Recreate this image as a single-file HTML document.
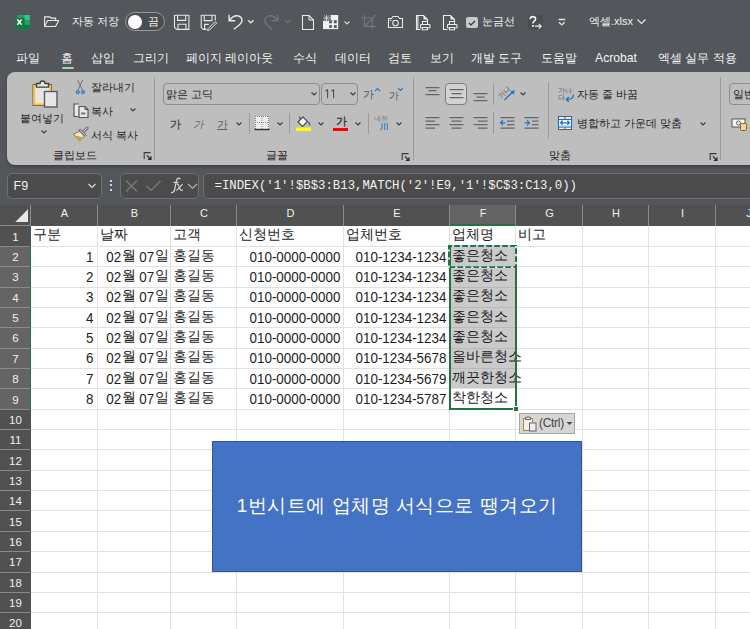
<!DOCTYPE html>
<html><head><meta charset="utf-8">
<style>
*{margin:0;padding:0;box-sizing:border-box}
html,body{width:750px;height:629px;overflow:hidden;background:#53565a;font-family:"Liberation Sans",sans-serif;position:relative}
.a{position:absolute;white-space:nowrap}
.tb{color:#f0f0f0;font-size:11px;line-height:14px}
.tab{color:#f2f2f2;font-size:12.2px;line-height:16px;top:49.7px}
#ribbon{position:absolute;left:7px;top:72px;width:760px;height:93px;background:#bebebe;border-radius:8px;box-shadow:0 2px 3px rgba(0,0,0,.25)}
.rt{color:#262626;font-size:11.2px;line-height:14px}
.sep{position:absolute;width:1px;background:#9a9a9a}
.fbox{position:absolute;top:173px;height:26px;border:1px solid #707070;border-radius:5px;background:#4b4b4b}
#hdr{position:absolute;left:0;top:205px;width:750px;height:20px;background:#4d4d4d}
#grid{position:absolute;left:31px;top:225px;width:719px;height:404px;background:#fff}
.vl{position:absolute;top:0;width:1px;height:404px;background:#e1e1e1}
.hl{position:absolute;left:0;width:719px;height:1px;background:#e1e1e1}
.ch{position:absolute;top:203.4px;height:20px;color:#f0f0f0;font-size:11px;line-height:20px;text-align:center}
.rh{position:absolute;left:0;width:31px;color:#f0f0f0;font-size:11.5px;text-align:center;background:#4d4d4d;padding-top:1.2px}
.c{position:absolute;color:#1c1c1c;font-size:14.5px;line-height:20px;white-space:nowrap}
</style></head><body>

<!-- title bar -->
<svg class="a" style="left:14px;top:14px" width="17" height="17" viewBox="0 0 17 17">
 <rect x="3.2" y="1" width="12.6" height="14.7" rx="1" fill="#21a366"/>
 <rect x="10.5" y="1" width="5.3" height="5" fill="#33c481"/>
 <rect x="3.2" y="10.8" width="12.6" height="4.9" fill="#107c41"/>
 <rect x="1" y="3.8" width="9.6" height="9.1" rx="0.8" fill="#107c41"/>
 <path d="M3.3 5.6 L7.6 10.7 M7.6 5.6 L3.3 10.7" stroke="#fff" stroke-width="1.5"/>
</svg>
<svg class="a" style="left:43px;top:15px" width="18" height="13" viewBox="0 0 18 13">
 <path d="M1.6 11.5 V1.9 H7 L8.1 3.1 H12.6 V5.5" fill="none" stroke="#ececec" stroke-width="1.1"/>
 <path d="M1.6 11.5 L4.6 5.5 H15.7 L12.6 11.5 Z" fill="none" stroke="#ececec" stroke-width="1.1" stroke-linejoin="round"/>
</svg>
<div class="a tb" style="left:72px;top:14px">자동 저장</div>
<div class="a" style="left:125px;top:12px;width:40px;height:19px;border:1px solid #9a9a9a;border-radius:10px;background:#4a4d51"></div>
<div class="a" style="left:128px;top:14.5px;width:14px;height:14px;border-radius:7px;background:#fff"></div>
<div class="a tb" style="left:148px;top:14px">끔</div>
<svg class="a" style="left:173px;top:14px" width="17" height="17" viewBox="0 0 17 17">
 <path d="M1.5 1.2 H15.9 V15.4 H3.5 L1.5 13.4 Z" fill="none" stroke="#e8e8e8" stroke-width="1.1" stroke-linejoin="round"/>
 <path d="M4.6 1.2 V6.4 H12.7 V1.2 M5 15.4 V10.3 H13 V15.4" fill="none" stroke="#e8e8e8" stroke-width="1.1"/>
</svg>
<svg class="a" style="left:200px;top:14px" width="18" height="18" viewBox="0 0 18 18">
 <path d="M6.8 15.4 H3.2 L1.2 13.4 V1.2 H15.3 V6.6" fill="none" stroke="#e8e8e8" stroke-width="1.1" stroke-linejoin="round"/>
 <path d="M4.2 1.2 V6.6 H12 V1.2 M4.6 15.2 V10.4 H8.8" fill="none" stroke="#e8e8e8" stroke-width="1.1"/>
 <path d="M15.2 7.6 L16.6 9 L9.6 16 L7.6 16.6 L8.2 14.6 Z" fill="none" stroke="#e8e8e8" stroke-width="1" stroke-linejoin="round"/>
</svg>
<svg class="a" style="left:227px;top:13px" width="18" height="18" viewBox="0 0 18 18">
 <path d="M2.1 1.7 V7.7 H8.2" fill="none" stroke="#ececec" stroke-width="1.4"/>
 <path d="M2.5 7.3 Q6 2.4 10.4 2.8 Q15.2 3.6 15 8 Q14.8 10.6 6.8 16.3" fill="none" stroke="#ececec" stroke-width="1.4"/>
</svg>
<svg class="a" style="left:247px;top:19px" width="8" height="6" viewBox="0 0 8 6"><path d="M1 1.2 L3.8 3.8 L6.6 1.2" fill="none" stroke="#e0e0e0" stroke-width="1.4"/></svg>
<svg class="a" style="left:262px;top:13px" width="18" height="18" viewBox="0 0 18 18">
 <path d="M15.7 1.7 V7.7 H9.6" fill="none" stroke="#75787c" stroke-width="1.3"/>
 <path d="M15.3 7.3 Q11.8 2.4 7.4 2.8 Q2.6 3.6 2.8 8 Q3 10.6 10.1 16.3" fill="none" stroke="#75787c" stroke-width="1.3"/>
</svg>
<svg class="a" style="left:283.5px;top:19px" width="8" height="6" viewBox="0 0 8 6"><path d="M1 1.2 L3.8 3.8 L6.6 1.2" fill="none" stroke="#75787c" stroke-width="1.2"/></svg>
<svg class="a" style="left:301px;top:14px" width="14" height="17" viewBox="0 0 14 17">
 <path d="M1.5 1.5 H8 L12.5 6 V15.5 H1.5 Z" fill="none" stroke="#e8e8e8" stroke-width="1.1"/>
 <path d="M8 1.5 V6 H12.5" fill="none" stroke="#e8e8e8" stroke-width="1"/>
</svg>
<svg class="a" style="left:322px;top:14px" width="17" height="17" viewBox="0 0 17 17">
 <rect x="1" y="6.8" width="15.2" height="8.3" fill="#f0f0f0"/>
 <rect x="8.6" y="1" width="7.6" height="5.8" fill="#f0f0f0"/>
 <rect x="7.2" y="6.3" width="1.4" height="8.8" fill="#f0f0f0"/>
 <rect x="7.2" y="6.3" width="2.7" height="3" fill="#53565a"/>
 <rect x="11.9" y="6.3" width="2.8" height="3" fill="#53565a"/>
 <rect x="7.2" y="11.1" width="2.7" height="2.8" fill="#53565a"/>
 <rect x="11.9" y="11.1" width="2.8" height="2.8" fill="#53565a"/>
 <path d="M4.6 0.5 V7.5 M1 4 H8 M2.2 1.6 L7 6.4 M7 1.6 L2.2 6.4" stroke="#d8d8d8" stroke-width="0.8"/>
</svg>
<svg class="a" style="left:343px;top:20px" width="8" height="6" viewBox="0 0 8 6"><path d="M1.5 1.5 L4 4 L6.5 1.5" fill="none" stroke="#d8d8d8" stroke-width="1.1"/></svg>
<svg class="a" style="left:360px;top:14px" width="17" height="17" viewBox="0 0 17 17">
 <path d="M4.5 1 V12.4 H16 M1.1 3.8 H12.4 V15.3 M5 11.8 L15.6 1.2" fill="none" stroke="#75787c" stroke-width="1.1"/>
</svg>
<svg class="a" style="left:387px;top:15px" width="17" height="14" viewBox="0 0 17 14">
 <path d="M1.5 3.5 H4.5 L6 1.5 H11 L12.5 3.5 H15.5 V12.5 H1.5 Z" fill="none" stroke="#e8e8e8" stroke-width="1.1"/>
 <circle cx="8.5" cy="8" r="2.8" fill="none" stroke="#e8e8e8" stroke-width="1.1"/>
 <rect x="2.8" y="4.8" width="1.5" height="1.2" fill="#e8e8e8"/>
</svg>
<svg class="a" style="left:415px;top:14px" width="16" height="17" viewBox="0 0 16 17">
 <rect x="1.5" y="1.5" width="2.2" height="14" fill="#b8b8b8"/><path d="M5.5 15.5 H1.5 V1.5 H8.5 L12.5 5.5 V7.5" fill="none" stroke="#ececec" stroke-width="1.1"/>
 <path d="M8.5 1.5 L12.5 5.5 H8.5 Z" fill="#ececec"/>
 <rect x="7.5" y="7.5" width="5" height="3.5" fill="#53565a" stroke="#ececec" stroke-width="1"/>
 <rect x="5.5" y="10.5" width="9.5" height="3.5" rx="0.8" fill="#53565a" stroke="#ececec" stroke-width="1.1"/>
 <rect x="7.5" y="13.5" width="5" height="2.3" fill="#53565a" stroke="#ececec" stroke-width="1"/>
</svg>
<svg class="a" style="left:442px;top:14px" width="16" height="17" viewBox="0 0 16 17">
 <path d="M5.5 15.5 H1.5 V1.5 H8.5 L12.5 5.5 V7.5" fill="none" stroke="#ececec" stroke-width="1.1"/>
 <path d="M8.5 1.5 L12.5 5.5 H8.5 Z" fill="#ececec"/>
 <rect x="7.5" y="7.5" width="5" height="3.5" fill="#53565a" stroke="#ececec" stroke-width="1"/>
 <rect x="5.5" y="10.5" width="9.5" height="3.5" rx="0.8" fill="#53565a" stroke="#ececec" stroke-width="1.1"/>
 <rect x="7.5" y="13.5" width="5" height="2.3" fill="#53565a" stroke="#ececec" stroke-width="1"/>
</svg>
<div class="a" style="left:466px;top:16.5px;width:11.5px;height:11.5px;border-radius:2px;background:#c8c8c8"></div>
<svg class="a" style="left:466px;top:16.5px" width="12" height="12" viewBox="0 0 12 12"><path d="M3 6 L5 8 L9 4" fill="none" stroke="#333" stroke-width="1.2"/></svg>
<div class="a tb" style="left:482px;top:14px">눈금선</div>
<svg class="a" style="left:528px;top:15px" width="15" height="15" viewBox="0 0 15 15">
 <rect x="0" y="0" width="15" height="14.5" fill="#4c4d4f"/>
 <path d="M2.2 4.2 Q2.2 1.6 4.9 1.6 Q7.6 1.6 7.6 4 Q7.6 5.4 6 6.3 Q4.9 7 4.9 8.6" fill="none" stroke="#f0f0f0" stroke-width="1.6"/>
 <rect x="4" y="10" width="1.8" height="1.8" fill="#f0f0f0"/>
 <path d="M6.8 11.2 H13.2 M10.8 8.8 L13.2 11.2 L10.8 13.6" fill="none" stroke="#f0f0f0" stroke-width="1.2"/>
</svg>
<svg class="a" style="left:557px;top:18px" width="10" height="9" viewBox="0 0 10 9"><path d="M1.5 1.5 H8.2 M2 4.3 L4.85 6.9 L7.7 4.3" fill="none" stroke="#e0e0e0" stroke-width="1.4"/></svg>
<div class="a tb" style="left:589px;top:14px">엑셀.xlsx</div>
<svg class="a" style="left:636px;top:18px" width="11" height="8" viewBox="0 0 11 8"><path d="M1.5 1.5 L5.5 5.5 L9.5 1.5" fill="none" stroke="#e8e8e8" stroke-width="1.2"/></svg>

<!-- tabs -->
<div class="a tab" style="left:16px">파일</div>
<div class="a tab" style="left:61px">홈</div>
<div class="a tab" style="left:91px">삽입</div>
<div class="a tab" style="left:133px">그리기</div>
<div class="a tab" style="left:186px">페이지 레이아웃</div>
<div class="a tab" style="left:293px">수식</div>
<div class="a tab" style="left:335px">데이터</div>
<div class="a tab" style="left:388px">검토</div>
<div class="a tab" style="left:430px">보기</div>
<div class="a tab" style="left:471px">개발 도구</div>
<div class="a tab" style="left:541px">도움말</div>
<div class="a tab" style="left:595px">Acrobat</div>
<div class="a tab" style="left:658px">엑셀 실무 적용</div>
<div class="a" style="left:62px;top:67px;width:12px;height:2px;background:#9fd6b4;border-radius:1px"></div>

<div id="ribbon"></div>
<!-- clipboard group -->
<svg class="a" style="left:30px;top:78px" width="30" height="32" viewBox="0 0 30 32">
 <rect x="3" y="6.5" width="18.5" height="21" fill="#e6e6e6" stroke="#7a5a14" stroke-width="1"/>
 <rect x="4.3" y="7.8" width="16" height="18.5" fill="none" stroke="#f2c14e" stroke-width="1.8"/>
 <path d="M6.5 9.2 V5.5 H10 A2.5 2.5 0 0 1 15 5.5 H18.5 V9.2 Z" fill="#e6e6e6" stroke="#404040" stroke-width="1.3"/>
 <rect x="14.5" y="13.5" width="12.5" height="15.5" fill="#e6e6e6" stroke="#5a5a5a" stroke-width="1.4"/>
</svg>
<div class="a rt" style="left:20px;top:111px">붙여넣기</div>
<svg class="a" style="left:40px;top:129px" width="8" height="6" viewBox="0 0 8 6"><path d="M1.5 1.5 L4 4 L6.5 1.5" fill="none" stroke="#404040" stroke-width="1.2"/></svg>
<svg class="a" style="left:74px;top:78px" width="14" height="17" viewBox="0 0 14 17">
 <path d="M3.5 1.8 L8.6 12.2 M8.7 1.8 L3.9 12.2" stroke="#6a6a6a" stroke-width="0.9" fill="none"/>
 <circle cx="3.8" cy="14.1" r="1.75" fill="#2a7ac8" stroke="#2a7ac8" stroke-width="0.6"/>
 <circle cx="9.0" cy="14.1" r="1.75" fill="#2a7ac8" stroke="#2a7ac8" stroke-width="0.6"/>
 <circle cx="3.8" cy="14.1" r="0.55" fill="#cfe0f0"/>
 <circle cx="9.0" cy="14.1" r="0.55" fill="#cfe0f0"/>
</svg>
<div class="a rt" style="left:91px;top:80px">잘라내기</div>
<svg class="a" style="left:72px;top:102px" width="18" height="18" viewBox="0 0 18 18">
 <path d="M7 2 H2 V14.5 H6" fill="#e8e8e8" stroke="#555" stroke-width="1.2"/>
 <path d="M7 4.5 H13 L16 7.5 V15.5 H7 Z" fill="#e8e8e8" stroke="#555" stroke-width="1.2"/>
 <path d="M13 4.5 V7.5 H16" fill="none" stroke="#555" stroke-width="1"/>
 <rect x="9" y="10.5" width="4.5" height="2" fill="#777"/>
</svg>
<div class="a rt" style="left:91px;top:104px">복사</div>
<svg class="a" style="left:129px;top:107px" width="8" height="6" viewBox="0 0 8 6"><path d="M1.5 1.5 L4 4 L6.5 1.5" fill="none" stroke="#404040" stroke-width="1.2"/></svg>
<svg class="a" style="left:70px;top:124px" width="22" height="20" viewBox="0 0 22 20">
 <path d="M3.3 10.2 L10.2 7 L14.4 12 L9.5 16.8 Z" fill="#e6e6e6" stroke="#8a6a18" stroke-width="0.9" stroke-linejoin="round"/>
 <path d="M4.6 11.6 L13.2 13.2 L9.5 16.8 Z" fill="#d6a32a"/>
 <path d="M13 8.2 L17.3 3.9" stroke="#6a6a6a" stroke-width="2.8" stroke-linecap="round"/>
 <path d="M13 8.2 L17.3 3.9" stroke="#e8e8e8" stroke-width="1" stroke-linecap="round"/>
 <path d="M10 6.2 L15.2 11.2" stroke="#6a6a6a" stroke-width="2.6" stroke-linecap="round"/>
 <path d="M10 6.2 L15.2 11.2" stroke="#e8e8e8" stroke-width="0.9" stroke-linecap="round"/>
</svg>
<div class="a rt" style="left:91px;top:128px">서식 복사</div>
<div class="a rt" style="left:53px;top:148px">클립보드</div>
<svg class="a" style="left:143px;top:151px" width="10" height="10" viewBox="0 0 10 10"><path d="M1.2 8 V1.6 H7.6" fill="none" stroke="#3a3a3a" stroke-width="1.1"/><path d="M3.9 4.3 L7.6 8 M8 5.3 V8.4 H4.9" fill="none" stroke="#2a2a2a" stroke-width="1.2"/></svg>
<div class="sep" style="left:154px;top:77px;height:83px"></div>

<!-- font group -->
<div class="a" style="left:163px;top:83px;width:157px;height:22px;border:1px solid #8c8c8c;border-radius:4px"></div>
<div class="a rt" style="left:166px;top:87px">맑은 고딕</div>
<svg class="a" style="left:310px;top:91px" width="8" height="6" viewBox="0 0 8 6"><path d="M1.5 1.5 L4 4 L6.5 1.5" fill="none" stroke="#404040" stroke-width="1.2"/></svg>
<div class="a" style="left:321px;top:83px;width:37px;height:22px;border:1px solid #8c8c8c;border-radius:4px"></div>
<svg class="a" style="left:324px;top:89px" width="14" height="10" viewBox="0 0 14 10"><path d="M1.5 2.2 L3.6 0.8 V9.2 M7.5 2.2 L9.6 0.8 V9.2" fill="none" stroke="#4a4a4a" stroke-width="1.05"/></svg>
<svg class="a" style="left:348.5px;top:91px" width="8" height="6" viewBox="0 0 8 6"><path d="M1.5 1.5 L4 4 L6.5 1.5" fill="none" stroke="#404040" stroke-width="1.2"/></svg>
<div class="a rt" style="left:363px;top:87px;color:#555">가</div>
<svg class="a" style="left:373.5px;top:86.5px" width="7" height="5" viewBox="0 0 7 5"><path d="M1 4 L3.5 1.5 L6 4" fill="none" stroke="#2577c9" stroke-width="1.1"/></svg>
<div class="a rt" style="left:389px;top:88.5px;color:#555;font-size:10px">가</div>
<svg class="a" style="left:397px;top:86.5px" width="7" height="5" viewBox="0 0 7 5"><path d="M1 1 L3.5 3.5 L6 1" fill="none" stroke="#2577c9" stroke-width="1.1"/></svg>

<div class="a rt" style="left:169.5px;top:116.5px;color:#4a4a4a;font-size:10.5px;-webkit-text-stroke:0.35px #4a4a4a">가</div>
<div class="a rt" style="left:193px;top:116.5px;color:#6c6c6c;font-size:10.5px;font-style:italic">가</div>
<div class="a rt" style="left:216.5px;top:116.5px;color:#606060;font-size:10.5px">가</div>
<div class="a" style="left:217px;top:128.8px;width:9.5px;height:1.2px;background:#606060"></div>
<svg class="a" style="left:235px;top:121px" width="8" height="6" viewBox="0 0 8 6"><path d="M1.5 1.5 L4 4 L6.5 1.5" fill="none" stroke="#404040" stroke-width="1.2"/></svg>
<div class="sep" style="left:248.5px;top:113px;height:21px"></div>
<svg class="a" style="left:254px;top:115px" width="16" height="16" viewBox="0 0 16 16">
 <rect x="1" y="1" width="14" height="13" fill="#eeeeee"/>
 <path d="M1.5 1 V14 M14.5 1 V14 M1 1.5 H15" fill="none" stroke="#7a7a7a" stroke-width="1" stroke-dasharray="1 1"/>
 <path d="M8 1 V14 M1 7.5 H15" fill="none" stroke="#8a8a8a" stroke-width="1" stroke-dasharray="1 1"/>
 <path d="M0.5 14.5 H15.5" stroke="#303030" stroke-width="1.4"/>
</svg>
<svg class="a" style="left:275.5px;top:121px" width="8" height="6" viewBox="0 0 8 6"><path d="M1.5 1.5 L4 4 L6.5 1.5" fill="none" stroke="#404040" stroke-width="1.2"/></svg>
<div class="sep" style="left:289px;top:113px;height:21px"></div>
<svg class="a" style="left:295px;top:115px" width="17" height="17" viewBox="0 0 17 17">
 <path d="M3 7 L8 2 L12.5 6.5 L7.5 11.5 Z" fill="#f4f4f4" stroke="#444" stroke-width="1.1"/>
 <path d="M5.5 4.5 L4.5 1.5" stroke="#444" stroke-width="1.1"/>
 <path d="M13.5 7 Q15 9 14.5 10.5" stroke="#2577c9" stroke-width="1.6" fill="none"/>
 <rect x="1" y="12.5" width="15" height="3.5" fill="#ffff00"/>
</svg>
<svg class="a" style="left:316.5px;top:121px" width="8" height="6" viewBox="0 0 8 6"><path d="M1.5 1.5 L4 4 L6.5 1.5" fill="none" stroke="#404040" stroke-width="1.2"/></svg>
<div class="a rt" style="left:335.5px;top:113.5px;font-size:10.8px;color:#303030;-webkit-text-stroke:0.3px #303030">가</div>
<div class="a" style="left:333px;top:127.5px;width:15px;height:3.5px;background:#ff0000"></div>
<svg class="a" style="left:354px;top:121px" width="8" height="6" viewBox="0 0 8 6"><path d="M1.5 1.5 L4 4 L6.5 1.5" fill="none" stroke="#404040" stroke-width="1.2"/></svg>
<div class="sep" style="left:367.5px;top:113px;height:21px"></div>
<div class="a" style="left:374px;top:115px;font-size:7px;line-height:8px;color:#777">내천</div>
<svg class="a" style="left:379px;top:122px" width="10" height="9" viewBox="0 0 10 9"><path d="M3 1 V5.5 Q3 7.8 1 8 M5.8 1 V8 M8.3 1 V8" fill="none" stroke="#2577c9" stroke-width="1"/></svg>
<svg class="a" style="left:395px;top:121px" width="8" height="6" viewBox="0 0 8 6"><path d="M1.5 1.5 L4 4 L6.5 1.5" fill="none" stroke="#404040" stroke-width="1.2"/></svg>
<div class="a rt" style="left:266px;top:148px">글꼴</div>
<svg class="a" style="left:401px;top:152px" width="10" height="10" viewBox="0 0 10 10"><path d="M1.2 8 V1.6 H7.6" fill="none" stroke="#3a3a3a" stroke-width="1.1"/><path d="M3.9 4.3 L7.6 8 M8 5.3 V8.4 H4.9" fill="none" stroke="#2a2a2a" stroke-width="1.2"/></svg>
<div class="sep" style="left:413px;top:77px;height:83px"></div>

<!-- alignment group -->
<svg class="a" style="left:424px;top:85px" width="17" height="12" viewBox="0 0 17 12">
 <path d="M1.5 2.5 H15.5 M4.5 5.5 H12.5 M1.5 9.5 H15.5" stroke="#666" stroke-width="1.25"/>
</svg>
<div class="a" style="left:445px;top:83px;width:22px;height:21.5px;border:1px solid #7c7c7c;border-radius:4px;background:#d2d2d2"></div>
<svg class="a" style="left:448px;top:87px" width="17" height="13" viewBox="0 0 17 13">
 <path d="M1.5 2.5 H15.5 M3.5 6.5 H13.5 M1.5 10.5 H15.5" stroke="#666" stroke-width="1.25"/>
</svg>
<svg class="a" style="left:472px;top:91px" width="17" height="12" viewBox="0 0 17 12">
 <path d="M1.5 2.5 H15.5 M4.5 6 H12.5 M1.5 9.5 H15.5" stroke="#666" stroke-width="1.25"/>
</svg>
<div class="sep" style="left:493px;top:83px;height:22px"></div>
<svg class="a" style="left:498px;top:84px" width="18" height="18" viewBox="0 0 18 18">
 <text x="6.9" y="10.6" font-size="7" fill="#5a5a5a" text-anchor="middle" transform="rotate(-45 6.9 8.6)">가나</text>
 <path d="M6.4 16.1 L14.2 8.3" stroke="#2a70c0" stroke-width="1.3"/>
 <path d="M16.8 6.2 L12.3 7.3 L15.7 10.7 Z" fill="#2a70c0"/>
</svg>
<svg class="a" style="left:518.5px;top:91px" width="8" height="6" viewBox="0 0 8 6"><path d="M1.5 1.5 L4 4 L6.5 1.5" fill="none" stroke="#404040" stroke-width="1.2"/></svg>
<svg class="a" style="left:424px;top:115px" width="17" height="16" viewBox="0 0 17 16">
 <path d="M1.5 2.5 H15.5 M1.5 6 H11 M1.5 9.5 H15.5 M1.5 13 H11" stroke="#666" stroke-width="1.25"/>
</svg>
<svg class="a" style="left:448px;top:115px" width="17" height="16" viewBox="0 0 17 16">
 <path d="M1.5 2.5 H15.5 M3.5 6 H13.5 M1.5 9.5 H15.5 M3.5 13 H13.5" stroke="#666" stroke-width="1.25"/>
</svg>
<svg class="a" style="left:472px;top:115px" width="17" height="16" viewBox="0 0 17 16">
 <path d="M1.5 2.5 H15.5 M6 6 H15.5 M1.5 9.5 H15.5 M6 13 H15.5" stroke="#666" stroke-width="1.25"/>
</svg>
<div class="sep" style="left:493px;top:112px;height:22px"></div>
<svg class="a" style="left:499px;top:115px" width="17" height="16" viewBox="0 0 17 16">
 <path d="M1.5 2.5 H15.5 M8 6 H15.5 M8 9.5 H15.5 M1.5 13 H15.5" stroke="#666" stroke-width="1.25"/>
 <path d="M6.5 7.8 H1.5 M4 5.3 L1.5 7.8 L4 10.3" fill="none" stroke="#2577c9" stroke-width="1.3"/>
</svg>
<svg class="a" style="left:523px;top:115px" width="17" height="16" viewBox="0 0 17 16">
 <path d="M1.5 2.5 H15.5 M9 6 H15.5 M9 9.5 H15.5 M1.5 13 H15.5" stroke="#666" stroke-width="1.25"/>
 <path d="M1.5 7.8 H6.5 M4 5.3 L6.5 7.8 L4 10.3" fill="none" stroke="#2577c9" stroke-width="1.3"/>
</svg>
<div class="sep" style="left:548px;top:82px;height:57px"></div>
<div class="a" style="left:558px;top:86.5px;font-size:6.5px;line-height:7px;color:#606060">가나<br>다</div>
<svg class="a" style="left:564px;top:92px" width="11" height="11" viewBox="0 0 11 11">
 <path d="M9.3 2.6 Q9.6 7.2 4.2 7.4 H2.3 M4.8 5 L2.3 7.4 L4.8 9.8" fill="none" stroke="#1f6fc0" stroke-width="1.3"/>
</svg>
<div class="a rt" style="left:577px;top:87px">자동 줄 바꿈</div>
<svg class="a" style="left:557px;top:115px" width="16" height="16" viewBox="0 0 16 16">
 <rect x="1.5" y="1.5" width="13" height="13" fill="#f2f2f2" stroke="#5a5a5a" stroke-width="1"/>
 <path d="M8 1.5 V4.5 M8 11.5 V14.5" stroke="#5a5a5a" stroke-width="1"/>
 <rect x="1.5" y="4.5" width="13" height="7.5" fill="#ffffff" stroke="#1f6fc0" stroke-width="1.2"/>
 <rect x="2.2" y="10.4" width="11.6" height="1.2" fill="#a8c8e8"/>
 <path d="M3.6 7.8 H12.4 M5.6 5.8 L3.6 7.8 L5.6 9.8 M10.4 5.8 L12.4 7.8 L10.4 9.8" fill="none" stroke="#1f6fc0" stroke-width="1.3"/>
</svg>
<div class="a rt" style="left:577px;top:116px">병합하고 가운데 맞춤</div>
<svg class="a" style="left:698.5px;top:121px" width="8" height="6" viewBox="0 0 8 6"><path d="M1.5 1.5 L4 4 L6.5 1.5" fill="none" stroke="#404040" stroke-width="1.2"/></svg>
<div class="a rt" style="left:549px;top:148px">맞춤</div>
<svg class="a" style="left:709px;top:152px" width="10" height="10" viewBox="0 0 10 10"><path d="M1.2 8 V1.6 H7.6" fill="none" stroke="#3a3a3a" stroke-width="1.1"/><path d="M3.9 4.3 L7.6 8 M8 5.3 V8.4 H4.9" fill="none" stroke="#2a2a2a" stroke-width="1.2"/></svg>
<div class="sep" style="left:720px;top:77px;height:83px"></div>
<!-- number group -->
<div class="a" style="left:729px;top:83px;width:40px;height:22px;border:1px solid #8c8c8c;border-radius:4px"></div>
<div class="a rt" style="left:733px;top:87px">일반</div>
<svg class="a" style="left:731px;top:117px" width="17" height="14" viewBox="0 0 17 14">
 <rect x="1" y="2" width="13" height="8" fill="#f4f4f4" stroke="#555" stroke-width="1"/>
 <circle cx="7.5" cy="6" r="2" fill="none" stroke="#555" stroke-width="0.9"/>
 <rect x="9.5" y="6.5" width="6" height="7" rx="1" fill="#e8d8a0" stroke="#8a6a14" stroke-width="1"/>
</svg>

<!-- formula bar -->
<div class="fbox" style="left:7px;width:95px"></div>
<div class="fbox" style="left:120px;width:79px"></div>
<div class="fbox" style="left:203px;width:560px"></div>
<div class="a" style="left:13.5px;top:179px;color:#f0f0f0;font-size:12.5px;line-height:14px">F9</div>
<div class="a" style="left:214.5px;top:179px;color:#f0f0f0;font-family:'Liberation Mono',monospace;font-size:12.33px;line-height:14px">=INDEX('1'!$B$3:B13,MATCH('2'!E9,'1'!$C$3:C13,0))</div>

<svg class="a" style="left:87px;top:182px" width="10" height="8" viewBox="0 0 10 8"><path d="M1.5 2 L5 5.5 L8.5 2" fill="none" stroke="#d8d8d8" stroke-width="1.2"/></svg>
<div class="a" style="left:110px;top:180px;width:2px;height:2px;background:#d0d0d0"></div>
<div class="a" style="left:110px;top:184.3px;width:2px;height:2px;background:#d0d0d0"></div>
<div class="a" style="left:110px;top:188.6px;width:2px;height:2px;background:#d0d0d0"></div>
<svg class="a" style="left:124px;top:179px" width="16" height="14" viewBox="0 0 16 14"><path d="M2 1.5 L13 12.5 M13 1.5 L2 12.5" stroke="#7d7d7d" stroke-width="1.2"/></svg>
<svg class="a" style="left:145px;top:179px" width="17" height="14" viewBox="0 0 17 14"><path d="M1.5 7 L6 11.5 L15.5 2" fill="none" stroke="#7d7d7d" stroke-width="1.2"/></svg>
<svg class="a" style="left:168px;top:176px" width="18" height="18" viewBox="0 0 18 18">
 <path d="M12.4 3.2 Q11.2 1.7 9.8 2.4 Q8.6 3.1 8 6.5 L6.6 13.8 Q6 16.8 3 16.6" fill="none" stroke="#d6d6d6" stroke-width="1.25"/>
 <path d="M5.3 6.4 H10.4" stroke="#d6d6d6" stroke-width="1.1"/>
 <path d="M8.4 8.3 Q9.7 7.4 10.6 9.4 L12.2 13.2 Q12.9 14.9 14.9 14" fill="none" stroke="#d6d6d6" stroke-width="1.15"/>
 <path d="M14.6 8.1 L8.4 14.6" stroke="#d6d6d6" stroke-width="1.15"/>
</svg>
<svg class="a" style="left:187px;top:182px" width="11" height="8" viewBox="0 0 11 8"><path d="M1 1.8 L5.5 6.3 L10 1.8" fill="none" stroke="#c4c4c4" stroke-width="1.1"/></svg>

<!--GRID-->
<div class="a" style="left:0;top:205px;width:750px;height:21.55000000000001px;background:#515151"></div>
<div class="a" style="left:0;top:226.55px;width:31px;height:402.45px;background:#515151"></div>
<div class="a" style="left:450px;top:205px;width:66px;height:21.55000000000001px;background:#646464"></div>
<div class="a" style="left:449px;top:224.05px;width:67px;height:2px;background:#217346"></div>
<div class="a" style="left:0;top:245.9px;width:31px;height:162.80000000000004px;background:#646464"></div>
<div class="a" style="left:29.5px;top:245.9px;width:2px;height:162.80000000000004px;background:#217346"></div>
<svg class="a" style="left:15px;top:208.5px" width="14" height="14" viewBox="0 0 14 14"><path d="M13 0.3 V13 H0.3 Z" fill="#e8e8e8"/></svg>
<div class="a" style="left:30px;top:205px;width:1px;height:20.55000000000001px;background:#8a8a8a"></div>
<div class="a" style="left:97px;top:205px;width:1px;height:20.55000000000001px;background:#8a8a8a"></div>
<div class="a" style="left:170px;top:205px;width:1px;height:20.55000000000001px;background:#8a8a8a"></div>
<div class="a" style="left:236px;top:205px;width:1px;height:20.55000000000001px;background:#8a8a8a"></div>
<div class="a" style="left:343px;top:205px;width:1px;height:20.55000000000001px;background:#8a8a8a"></div>
<div class="a" style="left:449px;top:205px;width:1px;height:20.55000000000001px;background:#8a8a8a"></div>
<div class="a" style="left:515px;top:205px;width:1px;height:20.55000000000001px;background:#8a8a8a"></div>
<div class="a" style="left:582px;top:205px;width:1px;height:20.55000000000001px;background:#8a8a8a"></div>
<div class="a" style="left:648px;top:205px;width:1px;height:20.55000000000001px;background:#8a8a8a"></div>
<div class="a" style="left:715px;top:205px;width:1px;height:20.55000000000001px;background:#8a8a8a"></div>
<div class="a" style="left:0;top:225.05px;width:31px;height:1px;background:#8a8a8a"></div>
<div class="ch" style="left:31px;width:67px">A</div>
<div class="ch" style="left:98px;width:73px">B</div>
<div class="ch" style="left:171px;width:66px">C</div>
<div class="ch" style="left:237px;width:107px">D</div>
<div class="ch" style="left:344px;width:106px">E</div>
<div class="ch" style="left:450px;width:66px">F</div>
<div class="ch" style="left:516px;width:67px">G</div>
<div class="ch" style="left:583px;width:66px">H</div>
<div class="ch" style="left:649px;width:67px">I</div>
<div class="ch" style="left:716px;width:66px">J</div>
<div class="rh" style="top:225.55px;height:20.35px;line-height:20.35px;background:transparent">1</div>
<div class="rh" style="top:245.90px;height:20.35px;line-height:20.35px;background:transparent">2</div>
<div class="a" style="left:0;top:245.90px;width:29.5px;height:1px;background:#8a8a8a"></div>
<div class="rh" style="top:266.25px;height:20.35px;line-height:20.35px;background:transparent">3</div>
<div class="a" style="left:0;top:266.25px;width:29.5px;height:1px;background:#8a8a8a"></div>
<div class="rh" style="top:286.60px;height:20.35px;line-height:20.35px;background:transparent">4</div>
<div class="a" style="left:0;top:286.60px;width:29.5px;height:1px;background:#8a8a8a"></div>
<div class="rh" style="top:306.95px;height:20.35px;line-height:20.35px;background:transparent">5</div>
<div class="a" style="left:0;top:306.95px;width:29.5px;height:1px;background:#8a8a8a"></div>
<div class="rh" style="top:327.30px;height:20.35px;line-height:20.35px;background:transparent">6</div>
<div class="a" style="left:0;top:327.30px;width:29.5px;height:1px;background:#8a8a8a"></div>
<div class="rh" style="top:347.65px;height:20.35px;line-height:20.35px;background:transparent">7</div>
<div class="a" style="left:0;top:347.65px;width:29.5px;height:1px;background:#8a8a8a"></div>
<div class="rh" style="top:368.00px;height:20.35px;line-height:20.35px;background:transparent">8</div>
<div class="a" style="left:0;top:368.00px;width:29.5px;height:1px;background:#8a8a8a"></div>
<div class="rh" style="top:388.35px;height:20.35px;line-height:20.35px;background:transparent">9</div>
<div class="a" style="left:0;top:388.35px;width:29.5px;height:1px;background:#8a8a8a"></div>
<div class="rh" style="top:408.70px;height:20.35px;line-height:20.35px;background:transparent">10</div>
<div class="a" style="left:0;top:408.70px;width:29.5px;height:1px;background:#8a8a8a"></div>
<div class="rh" style="top:429.05px;height:20.35px;line-height:20.35px;background:transparent">11</div>
<div class="a" style="left:0;top:429.05px;width:29.5px;height:1px;background:#8a8a8a"></div>
<div class="rh" style="top:449.40px;height:20.35px;line-height:20.35px;background:transparent">12</div>
<div class="a" style="left:0;top:449.40px;width:29.5px;height:1px;background:#8a8a8a"></div>
<div class="rh" style="top:469.75px;height:20.35px;line-height:20.35px;background:transparent">13</div>
<div class="a" style="left:0;top:469.75px;width:29.5px;height:1px;background:#8a8a8a"></div>
<div class="rh" style="top:490.10px;height:20.35px;line-height:20.35px;background:transparent">14</div>
<div class="a" style="left:0;top:490.10px;width:29.5px;height:1px;background:#8a8a8a"></div>
<div class="rh" style="top:510.45px;height:20.35px;line-height:20.35px;background:transparent">15</div>
<div class="a" style="left:0;top:510.45px;width:29.5px;height:1px;background:#8a8a8a"></div>
<div class="rh" style="top:530.80px;height:20.35px;line-height:20.35px;background:transparent">16</div>
<div class="a" style="left:0;top:530.80px;width:29.5px;height:1px;background:#8a8a8a"></div>
<div class="rh" style="top:551.15px;height:20.35px;line-height:20.35px;background:transparent">17</div>
<div class="a" style="left:0;top:551.15px;width:29.5px;height:1px;background:#8a8a8a"></div>
<div class="rh" style="top:571.50px;height:20.35px;line-height:20.35px;background:transparent">18</div>
<div class="a" style="left:0;top:571.50px;width:29.5px;height:1px;background:#8a8a8a"></div>
<div class="rh" style="top:591.85px;height:20.35px;line-height:20.35px;background:transparent">19</div>
<div class="a" style="left:0;top:591.85px;width:29.5px;height:1px;background:#8a8a8a"></div>
<div class="rh" style="top:612.20px;height:20.35px;line-height:20.35px;background:transparent">20</div>
<div class="a" style="left:0;top:612.20px;width:29.5px;height:1px;background:#8a8a8a"></div>
<div class="a" style="left:0;top:632.55px;width:29.5px;height:1px;background:#8a8a8a"></div>
<div class="a" style="left:31px;top:225.55px;width:719px;height:403.45px;background:#fff"></div>
<div class="a" style="left:97px;top:225.55px;width:1px;height:403.45px;background:#e1e1e1"></div>
<div class="a" style="left:170px;top:225.55px;width:1px;height:403.45px;background:#e1e1e1"></div>
<div class="a" style="left:236px;top:225.55px;width:1px;height:403.45px;background:#e1e1e1"></div>
<div class="a" style="left:343px;top:225.55px;width:1px;height:403.45px;background:#e1e1e1"></div>
<div class="a" style="left:449px;top:225.55px;width:1px;height:403.45px;background:#e1e1e1"></div>
<div class="a" style="left:515px;top:225.55px;width:1px;height:403.45px;background:#e1e1e1"></div>
<div class="a" style="left:582px;top:225.55px;width:1px;height:403.45px;background:#e1e1e1"></div>
<div class="a" style="left:648px;top:225.55px;width:1px;height:403.45px;background:#e1e1e1"></div>
<div class="a" style="left:715px;top:225.55px;width:1px;height:403.45px;background:#e1e1e1"></div>
<div class="a" style="left:31px;top:245.90px;width:719px;height:1px;background:#e1e1e1"></div>
<div class="a" style="left:31px;top:266.25px;width:719px;height:1px;background:#e1e1e1"></div>
<div class="a" style="left:31px;top:286.60px;width:719px;height:1px;background:#e1e1e1"></div>
<div class="a" style="left:31px;top:306.95px;width:719px;height:1px;background:#e1e1e1"></div>
<div class="a" style="left:31px;top:327.30px;width:719px;height:1px;background:#e1e1e1"></div>
<div class="a" style="left:31px;top:347.65px;width:719px;height:1px;background:#e1e1e1"></div>
<div class="a" style="left:31px;top:368.00px;width:719px;height:1px;background:#e1e1e1"></div>
<div class="a" style="left:31px;top:388.35px;width:719px;height:1px;background:#e1e1e1"></div>
<div class="a" style="left:31px;top:408.70px;width:719px;height:1px;background:#e1e1e1"></div>
<div class="a" style="left:31px;top:429.05px;width:719px;height:1px;background:#e1e1e1"></div>
<div class="a" style="left:31px;top:449.40px;width:719px;height:1px;background:#e1e1e1"></div>
<div class="a" style="left:31px;top:469.75px;width:719px;height:1px;background:#e1e1e1"></div>
<div class="a" style="left:31px;top:490.10px;width:719px;height:1px;background:#e1e1e1"></div>
<div class="a" style="left:31px;top:510.45px;width:719px;height:1px;background:#e1e1e1"></div>
<div class="a" style="left:31px;top:530.80px;width:719px;height:1px;background:#e1e1e1"></div>
<div class="a" style="left:31px;top:551.15px;width:719px;height:1px;background:#e1e1e1"></div>
<div class="a" style="left:31px;top:571.50px;width:719px;height:1px;background:#e1e1e1"></div>
<div class="a" style="left:31px;top:591.85px;width:719px;height:1px;background:#e1e1e1"></div>
<div class="a" style="left:31px;top:612.20px;width:719px;height:1px;background:#e1e1e1"></div>
<div class="a" style="left:31px;top:632.55px;width:719px;height:1px;background:#e1e1e1"></div>
<div class="a" style="left:450px;top:245.9px;width:65px;height:142.45000000000002px;background:#cacaca"></div>
<div class="a" style="left:450px;top:266.25px;width:65px;height:1px;background:#b8b8b8"></div>
<div class="a" style="left:450px;top:286.60px;width:65px;height:1px;background:#b8b8b8"></div>
<div class="a" style="left:450px;top:306.95px;width:65px;height:1px;background:#b8b8b8"></div>
<div class="a" style="left:450px;top:327.30px;width:65px;height:1px;background:#b8b8b8"></div>
<div class="a" style="left:450px;top:347.65px;width:65px;height:1px;background:#b8b8b8"></div>
<div class="a" style="left:450px;top:368.00px;width:65px;height:1px;background:#b8b8b8"></div>
<div class="c" style="left:33px;top:225.35px;font-size:13.5px;">구분</div>
<div class="c" style="left:100px;top:225.35px;font-size:13.5px;">날짜</div>
<div class="c" style="left:173px;top:225.35px;font-size:13.5px;">고객</div>
<div class="c" style="left:239px;top:225.35px;font-size:13.5px;">신청번호</div>
<div class="c" style="left:346px;top:225.35px;font-size:13.5px;">업체번호</div>
<div class="c" style="left:452px;top:225.35px;font-size:13.5px;">업체명</div>
<div class="c" style="left:518px;top:225.35px;font-size:13.5px;">비고</div>
<div class="c" style="right:656px;top:246.50px;font-size:15.4px;transform:scaleX(0.87);transform-origin:right">1</div>
<div class="c" style="right:629.1px;top:246.50px;font-size:15.4px;transform:scaleX(0.87);transform-origin:right">02</div>
<div class="c" style="left:121.6px;top:245.70px;font-size:13.5px;">월</div>
<div class="c" style="right:595.8px;top:246.50px;font-size:15.4px;transform:scaleX(0.87);transform-origin:right">07</div>
<div class="c" style="left:154.9px;top:245.70px;font-size:13.5px;">일</div>
<div class="c" style="left:173px;top:245.70px;font-size:13.5px;">홍길동</div>
<div class="c" style="right:410px;top:246.50px;font-size:15.4px;transform:scaleX(0.87);transform-origin:right">010-0000-0000</div>
<div class="c" style="right:303.5px;top:246.50px;font-size:15.4px;transform:scaleX(0.87);transform-origin:right">010-1234-1234</div>
<div class="c" style="left:451.5px;top:245.70px;font-size:13.5px;">좋은청소</div>
<div class="c" style="right:656px;top:266.85px;font-size:15.4px;transform:scaleX(0.87);transform-origin:right">2</div>
<div class="c" style="right:629.1px;top:266.85px;font-size:15.4px;transform:scaleX(0.87);transform-origin:right">02</div>
<div class="c" style="left:121.6px;top:266.05px;font-size:13.5px;">월</div>
<div class="c" style="right:595.8px;top:266.85px;font-size:15.4px;transform:scaleX(0.87);transform-origin:right">07</div>
<div class="c" style="left:154.9px;top:266.05px;font-size:13.5px;">일</div>
<div class="c" style="left:173px;top:266.05px;font-size:13.5px;">홍길동</div>
<div class="c" style="right:410px;top:266.85px;font-size:15.4px;transform:scaleX(0.87);transform-origin:right">010-0000-0000</div>
<div class="c" style="right:303.5px;top:266.85px;font-size:15.4px;transform:scaleX(0.87);transform-origin:right">010-1234-1234</div>
<div class="c" style="left:451.5px;top:266.05px;font-size:13.5px;">좋은청소</div>
<div class="c" style="right:656px;top:287.20px;font-size:15.4px;transform:scaleX(0.87);transform-origin:right">3</div>
<div class="c" style="right:629.1px;top:287.20px;font-size:15.4px;transform:scaleX(0.87);transform-origin:right">02</div>
<div class="c" style="left:121.6px;top:286.40px;font-size:13.5px;">월</div>
<div class="c" style="right:595.8px;top:287.20px;font-size:15.4px;transform:scaleX(0.87);transform-origin:right">07</div>
<div class="c" style="left:154.9px;top:286.40px;font-size:13.5px;">일</div>
<div class="c" style="left:173px;top:286.40px;font-size:13.5px;">홍길동</div>
<div class="c" style="right:410px;top:287.20px;font-size:15.4px;transform:scaleX(0.87);transform-origin:right">010-0000-0000</div>
<div class="c" style="right:303.5px;top:287.20px;font-size:15.4px;transform:scaleX(0.87);transform-origin:right">010-1234-1234</div>
<div class="c" style="left:451.5px;top:286.40px;font-size:13.5px;">좋은청소</div>
<div class="c" style="right:656px;top:307.55px;font-size:15.4px;transform:scaleX(0.87);transform-origin:right">4</div>
<div class="c" style="right:629.1px;top:307.55px;font-size:15.4px;transform:scaleX(0.87);transform-origin:right">02</div>
<div class="c" style="left:121.6px;top:306.75px;font-size:13.5px;">월</div>
<div class="c" style="right:595.8px;top:307.55px;font-size:15.4px;transform:scaleX(0.87);transform-origin:right">07</div>
<div class="c" style="left:154.9px;top:306.75px;font-size:13.5px;">일</div>
<div class="c" style="left:173px;top:306.75px;font-size:13.5px;">홍길동</div>
<div class="c" style="right:410px;top:307.55px;font-size:15.4px;transform:scaleX(0.87);transform-origin:right">010-0000-0000</div>
<div class="c" style="right:303.5px;top:307.55px;font-size:15.4px;transform:scaleX(0.87);transform-origin:right">010-1234-1234</div>
<div class="c" style="left:451.5px;top:306.75px;font-size:13.5px;">좋은청소</div>
<div class="c" style="right:656px;top:327.90px;font-size:15.4px;transform:scaleX(0.87);transform-origin:right">5</div>
<div class="c" style="right:629.1px;top:327.90px;font-size:15.4px;transform:scaleX(0.87);transform-origin:right">02</div>
<div class="c" style="left:121.6px;top:327.10px;font-size:13.5px;">월</div>
<div class="c" style="right:595.8px;top:327.90px;font-size:15.4px;transform:scaleX(0.87);transform-origin:right">07</div>
<div class="c" style="left:154.9px;top:327.10px;font-size:13.5px;">일</div>
<div class="c" style="left:173px;top:327.10px;font-size:13.5px;">홍길동</div>
<div class="c" style="right:410px;top:327.90px;font-size:15.4px;transform:scaleX(0.87);transform-origin:right">010-0000-0000</div>
<div class="c" style="right:303.5px;top:327.90px;font-size:15.4px;transform:scaleX(0.87);transform-origin:right">010-1234-1234</div>
<div class="c" style="left:451.5px;top:327.10px;font-size:13.5px;">좋은청소</div>
<div class="c" style="right:656px;top:348.25px;font-size:15.4px;transform:scaleX(0.87);transform-origin:right">6</div>
<div class="c" style="right:629.1px;top:348.25px;font-size:15.4px;transform:scaleX(0.87);transform-origin:right">02</div>
<div class="c" style="left:121.6px;top:347.45px;font-size:13.5px;">월</div>
<div class="c" style="right:595.8px;top:348.25px;font-size:15.4px;transform:scaleX(0.87);transform-origin:right">07</div>
<div class="c" style="left:154.9px;top:347.45px;font-size:13.5px;">일</div>
<div class="c" style="left:173px;top:347.45px;font-size:13.5px;">홍길동</div>
<div class="c" style="right:410px;top:348.25px;font-size:15.4px;transform:scaleX(0.87);transform-origin:right">010-0000-0000</div>
<div class="c" style="right:303.5px;top:348.25px;font-size:15.4px;transform:scaleX(0.87);transform-origin:right">010-1234-5678</div>
<div class="c" style="left:451.5px;top:347.45px;font-size:13.5px;">올바른청소</div>
<div class="c" style="right:656px;top:368.60px;font-size:15.4px;transform:scaleX(0.87);transform-origin:right">7</div>
<div class="c" style="right:629.1px;top:368.60px;font-size:15.4px;transform:scaleX(0.87);transform-origin:right">02</div>
<div class="c" style="left:121.6px;top:367.80px;font-size:13.5px;">월</div>
<div class="c" style="right:595.8px;top:368.60px;font-size:15.4px;transform:scaleX(0.87);transform-origin:right">07</div>
<div class="c" style="left:154.9px;top:367.80px;font-size:13.5px;">일</div>
<div class="c" style="left:173px;top:367.80px;font-size:13.5px;">홍길동</div>
<div class="c" style="right:410px;top:368.60px;font-size:15.4px;transform:scaleX(0.87);transform-origin:right">010-0000-0000</div>
<div class="c" style="right:303.5px;top:368.60px;font-size:15.4px;transform:scaleX(0.87);transform-origin:right">010-1234-5679</div>
<div class="c" style="left:451.5px;top:367.80px;font-size:13.5px;">깨끗한청소</div>
<div class="c" style="right:656px;top:388.95px;font-size:15.4px;transform:scaleX(0.87);transform-origin:right">8</div>
<div class="c" style="right:629.1px;top:388.95px;font-size:15.4px;transform:scaleX(0.87);transform-origin:right">02</div>
<div class="c" style="left:121.6px;top:388.15px;font-size:13.5px;">월</div>
<div class="c" style="right:595.8px;top:388.95px;font-size:15.4px;transform:scaleX(0.87);transform-origin:right">07</div>
<div class="c" style="left:154.9px;top:388.15px;font-size:13.5px;">일</div>
<div class="c" style="left:173px;top:388.15px;font-size:13.5px;">홍길동</div>
<div class="c" style="right:410px;top:388.95px;font-size:15.4px;transform:scaleX(0.87);transform-origin:right">010-0000-0000</div>
<div class="c" style="right:303.5px;top:388.95px;font-size:15.4px;transform:scaleX(0.87);transform-origin:right">010-1234-5787</div>
<div class="c" style="left:451.5px;top:388.15px;font-size:13.5px;">착한청소</div>
<div class="a" style="left:448.5px;top:245.40px;width:68px;height:164.50px;border:2px solid #217346"></div>
<div class="a" style="left:513px;top:406.40px;width:6px;height:6px;background:#217346;border:1px solid #fff"></div>
<svg class="a" style="left:448px;top:244.90px" width="69" height="23.3" viewBox="0 0 69 23.3"><rect x="1" y="1" width="67" height="21.3" fill="none" stroke="#217346" stroke-width="2"/><rect x="1" y="1" width="67" height="21.3" fill="none" stroke="#fff" stroke-width="1.6" stroke-dasharray="2.2 5.8" stroke-dashoffset="-3"/></svg>
<div class="a" style="left:519px;top:413px;width:56px;height:21px;background:#d6d6d6;border:1px solid #a6a6a6"></div>
<svg class="a" style="left:522px;top:415px" width="16" height="17" viewBox="0 0 16 17"><rect x="1.5" y="3.5" width="9" height="12" fill="#f0f0f0" stroke="#b08a30" stroke-width="1"/><path d="M3.5 4.5 V2.5 H5 A1 1 0 0 1 7 2.5 H8.5 V4.5 Z" fill="#e8e8e8" stroke="#555" stroke-width="0.9"/><rect x="7.5" y="8" width="6.5" height="8" fill="#f0f0f0" stroke="#666" stroke-width="1"/></svg>
<div class="a" style="left:539px;top:416px;font-size:12px;line-height:15px;color:#444;letter-spacing:-0.3px">(Ctrl)</div>
<svg class="a" style="left:566px;top:421px" width="7" height="5" viewBox="0 0 7 5"><path d="M0.5 1 H6.5 L3.5 4 Z" fill="#444"/></svg>
<div class="a" style="left:212px;top:440.5px;width:369.8px;height:131px;background:#4472c4;border:1px solid #2f5597"></div>
<div class="a" style="left:212px;top:493.5px;width:369.8px;text-align:center;color:#fff;font-size:19px;line-height:24px;letter-spacing:0.5px;text-indent:0.5px">1번시트에 업체명 서식으로 땡겨오기</div>
<!--/GRID-->
</body></html>
